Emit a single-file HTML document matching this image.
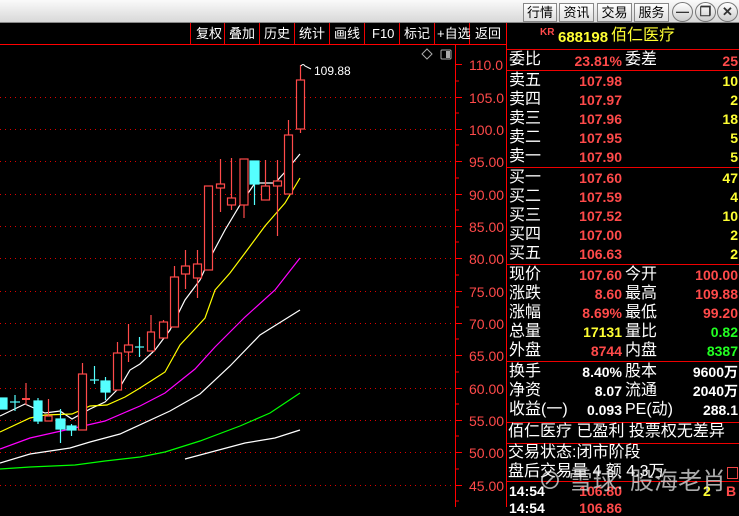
<!DOCTYPE html>
<html><head><meta charset="utf-8">
<style>
*{margin:0;padding:0;box-sizing:border-box}
body{width:739px;height:507px;background:#000;overflow:hidden;position:relative;font-family:"Liberation Sans","Noto Sans CJK SC",sans-serif}
.top{position:absolute;left:0;top:0;width:739px;height:23px;background:linear-gradient(#fafafa,#d8d8d8);border-bottom:1px solid #888}
.tb{position:absolute;top:3px;height:19px;border:1px solid #888;background:linear-gradient(#fff,#ddd);font-size:13px;color:#000;text-align:center;line-height:17px}
.cb{position:absolute;top:2px;width:21px;height:20px;border:1px solid #777;border-radius:50%;background:linear-gradient(#fff,#ccc);font-size:13px;text-align:center;line-height:18px;color:#333;font-weight:bold}
.t{position:absolute;white-space:nowrap;line-height:1}
.w{color:#fff}.r{color:#ff4a4a}.y{color:#ffff33}.g{color:#22ff22}
.lab{font-size:16px;color:#fff}
.num{font-size:14px;font-weight:bold}
.hl{position:absolute;height:1px;background:#e00}
.vl{position:absolute;width:1px;background:#e00}
</style></head><body>
<div class="top">
<div class="tb" style="left:523px;width:34px">行情</div>
<div class="tb" style="left:559px;width:35px">资讯</div>
<div class="tb" style="left:597px;width:35px">交易</div>
<div class="tb" style="left:634px;width:35px">服务</div>
<div class="cb" style="left:672px">—</div>
<div class="cb" style="left:695px">❐</div>
<div class="cb" style="left:717px">✕</div>
</div>
<!-- toolbar -->
<div class="hl" style="left:0;top:44px;width:507px;background:#f00"></div>
<div class="vl" style="left:190px;top:23px;height:21px"></div>
<div class="vl" style="left:224px;top:23px;height:21px"></div>
<div class="vl" style="left:259px;top:23px;height:21px"></div>
<div class="vl" style="left:294px;top:23px;height:21px"></div>
<div class="vl" style="left:329px;top:23px;height:21px"></div>
<div class="vl" style="left:364px;top:23px;height:21px"></div>
<div class="vl" style="left:399px;top:23px;height:21px"></div>
<div class="vl" style="left:434px;top:23px;height:21px"></div>
<div class="vl" style="left:469px;top:23px;height:21px"></div>
<div class="t w" style="left:196px;top:27px;font-size:13px">复权</div>
<div class="t w" style="left:229px;top:27px;font-size:13px">叠加</div>
<div class="t w" style="left:264px;top:27px;font-size:13px">历史</div>
<div class="t w" style="left:299px;top:27px;font-size:13px">统计</div>
<div class="t w" style="left:334px;top:27px;font-size:13px">画线</div>
<div class="t w" style="left:372px;top:27px;font-size:13px">F10</div>
<div class="t w" style="left:404px;top:27px;font-size:13px">标记</div>
<div class="t w" style="left:437px;top:27px;font-size:13px">+自选</div>
<div class="t w" style="left:475px;top:27px;font-size:13px">返回</div>

<svg style="position:absolute;left:0;top:0" width="507" height="507">
<g stroke="#d00" stroke-dasharray="1 4" stroke-width="1">
<line x1="0" x2="455" y1="97.5" y2="97.5"/><line x1="0" x2="455" y1="129.5" y2="129.5"/>
<line x1="0" x2="455" y1="161.5" y2="161.5"/><line x1="0" x2="455" y1="194.5" y2="194.5"/>
<line x1="0" x2="455" y1="226.5" y2="226.5"/><line x1="0" x2="455" y1="258.5" y2="258.5"/>
<line x1="0" x2="455" y1="291.5" y2="291.5"/><line x1="0" x2="455" y1="323.5" y2="323.5"/>
<line x1="0" x2="455" y1="355.5" y2="355.5"/><line x1="0" x2="455" y1="388.5" y2="388.5"/>
<line x1="0" x2="455" y1="420.5" y2="420.5"/><line x1="0" x2="455" y1="452.5" y2="452.5"/>
<line x1="0" x2="455" y1="485.5" y2="485.5"/>
</g>
<line x1="455.5" x2="455.5" y1="45" y2="507" stroke="#f00"/>
<g stroke="#f00">
<line x1="455" x2="462" y1="64.5" y2="64.5"/><line x1="455" x2="462" y1="97.5" y2="97.5"/><line x1="455" x2="462" y1="129.5" y2="129.5"/><line x1="455" x2="462" y1="161.5" y2="161.5"/><line x1="455" x2="462" y1="194.5" y2="194.5"/><line x1="455" x2="462" y1="226.5" y2="226.5"/><line x1="455" x2="462" y1="258.5" y2="258.5"/><line x1="455" x2="462" y1="291.5" y2="291.5"/><line x1="455" x2="462" y1="323.5" y2="323.5"/><line x1="455" x2="462" y1="355.5" y2="355.5"/><line x1="455" x2="462" y1="388.5" y2="388.5"/><line x1="455" x2="462" y1="420.5" y2="420.5"/><line x1="455" x2="462" y1="452.5" y2="452.5"/><line x1="455" x2="462" y1="485.5" y2="485.5"/>
<line x1="455" x2="459" y1="81" y2="81"/><line x1="455" x2="459" y1="113" y2="113"/><line x1="455" x2="459" y1="145" y2="145"/><line x1="455" x2="459" y1="178" y2="178"/><line x1="455" x2="459" y1="210" y2="210"/><line x1="455" x2="459" y1="242" y2="242"/><line x1="455" x2="459" y1="275" y2="275"/><line x1="455" x2="459" y1="307" y2="307"/><line x1="455" x2="459" y1="339" y2="339"/><line x1="455" x2="459" y1="372" y2="372"/><line x1="455" x2="459" y1="404" y2="404"/><line x1="455" x2="459" y1="436" y2="436"/><line x1="455" x2="459" y1="469" y2="469"/><line x1="455" x2="459" y1="501" y2="501"/>
</g>
<g fill="#ff4a4a" font-family="Liberation Sans" font-size="14">
<text x="469" y="70">110.0</text><text x="469" y="103">105.0</text><text x="469" y="135">100.0</text><text x="469" y="167">95.00</text><text x="469" y="200">90.00</text><text x="469" y="232">85.00</text><text x="469" y="264">80.00</text><text x="469" y="297">75.00</text><text x="469" y="329">70.00</text><text x="469" y="361">65.00</text><text x="469" y="394">60.00</text><text x="469" y="426">55.00</text><text x="469" y="458">50.00</text><text x="469" y="491">45.00</text>
</g>
<path d="M427 49 l5 5 -5 5 -5 -5z" fill="none" stroke="#aaa"/>
<rect x="441" y="50" width="10" height="9" fill="none" stroke="#aaa" rx="1"/><rect x="446" y="51" width="4" height="7" fill="#aaa"/>
<!-- MAs -->
<g fill="none" stroke-width="1.2">
<polyline stroke="#fff" points="0,416 25,404 45,413 60,411 72,419 90,409 105,402 120,387 130,370 140,364 155,350 170,330 185,300 200,280 210,258 225,230 240,205 255,183 275,183 285,172 300,154"/>
<polyline stroke="#ffff00" points="0,432 30,418 45,415 72,414 90,406 107,405 125,397 140,388 165,372 180,345 195,329 205,318 215,290 230,273 245,253 265,226 285,203 300,178"/>
<polyline stroke="#ff00ff" points="0,449 30,438 70,429 105,421 140,406 165,393 195,369 215,347 245,317 275,290 300,258"/>
<polyline stroke="#fff" points="0,463 30,454 70,448 90,442 120,434 170,411 200,394 230,366 260,335 300,310"/>
<polyline stroke="#00ff00" points="0,469 30,467 75,465 105,461 140,457 165,452 200,441 240,426 270,413 300,393"/>
<polyline stroke="#fff" points="185,459 215,451 245,443 275,438 300,430"/>
</g>
<!-- candles -->
<g stroke="#ff4a4a" fill="#000" stroke-width="1.2">
<line x1="26" x2="26" y1="383" y2="405"/><line x1="22" x2="30" y1="399" y2="399" stroke-width="2"/>
<line x1="48.5" x2="48.5" y1="399" y2="416"/><rect x="45" y="416" width="7" height="5"/>
<line x1="82.5" x2="82.5" y1="363" y2="374"/><rect x="78.5" y="374" width="8" height="56"/>
<line x1="117.5" x2="117.5" y1="342" y2="353"/><rect x="113.5" y="353" width="8" height="37"/>
<line x1="128.5" x2="128.5" y1="324" y2="362"/><rect x="124.5" y="345" width="8" height="7"/>
<line x1="151" x2="151" y1="315" y2="332"/><rect x="147.5" y="332" width="7" height="19"/>
<line x1="163.5" x2="163.5" y1="320" y2="322"/><rect x="159.5" y="322" width="8" height="16"/>
<line x1="174.5" x2="174.5" y1="266" y2="277"/><rect x="170.5" y="277" width="8" height="50"/>
<line x1="185.5" x2="185.5" y1="250" y2="289"/><rect x="181.5" y="266" width="8" height="8"/>
<line x1="197.5" x2="197.5" y1="250" y2="298"/><rect x="193.5" y="264" width="8" height="14"/>
<rect x="204.5" y="186" width="8" height="84"/>
<line x1="220.5" x2="220.5" y1="159" y2="212"/><rect x="216.5" y="184" width="8" height="4"/>
<line x1="231.5" x2="231.5" y1="158" y2="210"/><rect x="227.5" y="198" width="8" height="7"/>
<line x1="244" x2="244" y1="159" y2="218"/><rect x="240" y="159" width="8" height="46"/>
<line x1="265.5" x2="265.5" y1="160" y2="186"/><rect x="261.5" y="186" width="8" height="14"/>
<line x1="277.5" x2="277.5" y1="160" y2="236"/><rect x="273.5" y="181" width="8" height="5"/>
<line x1="288.5" x2="288.5" y1="120" y2="135"/><rect x="284.5" y="135" width="8" height="59"/>
<line x1="300.5" x2="300.5" y1="65" y2="133"/><rect x="296.5" y="80" width="8" height="49"/>
</g>
<g fill="#55ffff" stroke="#55ffff" stroke-width="1.2">
<rect x="0" y="398" width="7" height="11"/>
<line x1="15" x2="15" y1="395" y2="411"/><line x1="10" x2="20" y1="402" y2="402"/>
<line x1="38" x2="38" y1="398" y2="424"/><rect x="34" y="401" width="8" height="20"/>
<line x1="60.5" x2="60.5" y1="409" y2="443"/><rect x="56" y="419" width="9" height="10"/>
<line x1="71.5" x2="71.5" y1="424" y2="436"/><rect x="67" y="426" width="9" height="4"/>
<line x1="94.5" x2="94.5" y1="366" y2="384"/><line x1="90" x2="99" y1="380" y2="380"/>
<line x1="105.5" x2="105.5" y1="377" y2="400"/><rect x="101" y="381" width="9" height="11"/>
<line x1="139.5" x2="139.5" y1="337" y2="357"/><line x1="135" x2="144" y1="347" y2="347"/>
<line x1="254.5" x2="254.5" y1="184" y2="205"/><rect x="250" y="161" width="9" height="23"/>
</g>
<path d="M301 66 q2 -3 4 0 l6 3" fill="none" stroke="#fff"/>
<text x="314" y="75" fill="#fff" font-family="Liberation Sans" font-size="12">109.88</text>
<line x1="506.5" x2="506.5" y1="23" y2="507" stroke="#f00"/>
</svg>

<!-- right panel -->
<div class="hl" style="left:507px;top:49px;width:232px"></div>
<div class="hl" style="left:507px;top:70px;width:232px"></div>
<div class="hl" style="left:507px;top:167px;width:232px"></div>
<div class="hl" style="left:507px;top:264px;width:232px"></div>
<div class="hl" style="left:507px;top:361px;width:232px"></div>
<div class="hl" style="left:507px;top:422px;width:232px"></div>
<div class="hl" style="left:507px;top:443px;width:232px"></div>
<div class="hl" style="left:507px;top:481px;width:232px"></div>
<div class="t r" style="left:540px;top:28px;font-size:10px;font-weight:bold">KR</div>
<div class="t y" style="left:558px;top:30px;font-size:15px;font-weight:bold">688198</div>
<div class="t y" style="left:611px;top:28px;font-size:16px">佰仁医疗</div>

<div class="t lab" style="left:509px;top:52px">委比</div>
<div class="t num r" style="right:117px;top:54px">23.81%</div>
<div class="t lab" style="left:625px;top:52px">委差</div>
<div class="t num r" style="right:1px;top:54px">25</div>

<div class="t lab" style="left:509px;top:73px">卖五</div><div class="t num r" style="right:117px;top:74px">107.98</div><div class="t num y" style="right:1px;top:74px">10</div>
<div class="t lab" style="left:509px;top:92px">卖四</div><div class="t num r" style="right:117px;top:93px">107.97</div><div class="t num y" style="right:1px;top:93px">2</div>
<div class="t lab" style="left:509px;top:111px">卖三</div><div class="t num r" style="right:117px;top:112px">107.96</div><div class="t num y" style="right:1px;top:112px">18</div>
<div class="t lab" style="left:509px;top:130px">卖二</div><div class="t num r" style="right:117px;top:131px">107.95</div><div class="t num y" style="right:1px;top:131px">5</div>
<div class="t lab" style="left:509px;top:149px">卖一</div><div class="t num r" style="right:117px;top:150px">107.90</div><div class="t num y" style="right:1px;top:150px">5</div>

<div class="t lab" style="left:509px;top:170px">买一</div><div class="t num r" style="right:117px;top:171px">107.60</div><div class="t num y" style="right:1px;top:171px">47</div>
<div class="t lab" style="left:509px;top:189px">买二</div><div class="t num r" style="right:117px;top:190px">107.59</div><div class="t num y" style="right:1px;top:190px">4</div>
<div class="t lab" style="left:509px;top:208px">买三</div><div class="t num r" style="right:117px;top:209px">107.52</div><div class="t num y" style="right:1px;top:209px">10</div>
<div class="t lab" style="left:509px;top:227px">买四</div><div class="t num r" style="right:117px;top:228px">107.00</div><div class="t num y" style="right:1px;top:228px">2</div>
<div class="t lab" style="left:509px;top:246px">买五</div><div class="t num r" style="right:117px;top:247px">106.63</div><div class="t num y" style="right:1px;top:247px">2</div>

<div class="t lab" style="left:509px;top:267px">现价</div><div class="t num r" style="right:117px;top:268px">107.60</div><div class="t lab" style="left:625px;top:267px">今开</div><div class="t num r" style="right:1px;top:268px">100.00</div>
<div class="t lab" style="left:509px;top:286px">涨跌</div><div class="t num r" style="right:117px;top:287px">8.60</div><div class="t lab" style="left:625px;top:286px">最高</div><div class="t num r" style="right:1px;top:287px">109.88</div>
<div class="t lab" style="left:509px;top:305px">涨幅</div><div class="t num r" style="right:117px;top:306px">8.69%</div><div class="t lab" style="left:625px;top:305px">最低</div><div class="t num r" style="right:1px;top:306px">99.20</div>
<div class="t lab" style="left:509px;top:324px">总量</div><div class="t num y" style="right:117px;top:325px">17131</div><div class="t lab" style="left:625px;top:324px">量比</div><div class="t num g" style="right:1px;top:325px">0.82</div>
<div class="t lab" style="left:509px;top:343px">外盘</div><div class="t num r" style="right:117px;top:344px">8744</div><div class="t lab" style="left:625px;top:343px">内盘</div><div class="t num g" style="right:1px;top:344px">8387</div>

<div class="t lab" style="left:509px;top:364px">换手</div><div class="t num w" style="right:117px;top:365px">8.40%</div><div class="t lab" style="left:625px;top:364px">股本</div><div class="t num w" style="right:1px;top:365px">9600万</div>
<div class="t lab" style="left:509px;top:383px">净资</div><div class="t num w" style="right:117px;top:384px">8.07</div><div class="t lab" style="left:625px;top:383px">流通</div><div class="t num w" style="right:1px;top:384px">2040万</div>
<div class="t lab" style="left:509px;top:402px">收益(一)</div><div class="t num w" style="right:117px;top:403px">0.093</div><div class="t lab" style="left:625px;top:402px">PE(动)</div><div class="t num w" style="right:1px;top:403px">288.1</div>

<div class="t lab" style="left:508px;top:424px">佰仁医疗 已盈利 投票权无差异</div>
<div class="t lab" style="left:508px;top:445px">交易状态:闭市阶段</div>
<div class="t lab" style="left:508px;top:464px">盘后交易量 4 额 4.3万</div>
<div style="position:absolute;left:727px;top:467px;width:11px;height:12px;border:1px solid #e44"></div>
<div class="t num w" style="left:509px;top:484px">14:54</div><div class="t num r" style="right:117px;top:484px">106.80</div><div class="t num y" style="left:703px;top:484px">2</div><div class="t num r" style="left:726px;top:484px">B</div>
<div class="t num w" style="left:509px;top:501px">14:54</div><div class="t num r" style="right:117px;top:501px">106.86</div>
<div class="t" style="left:538px;top:470px;font-size:24px;color:rgba(230,230,230,0.75)">⊘ 雪球: 股海老肖</div>
</body></html>
